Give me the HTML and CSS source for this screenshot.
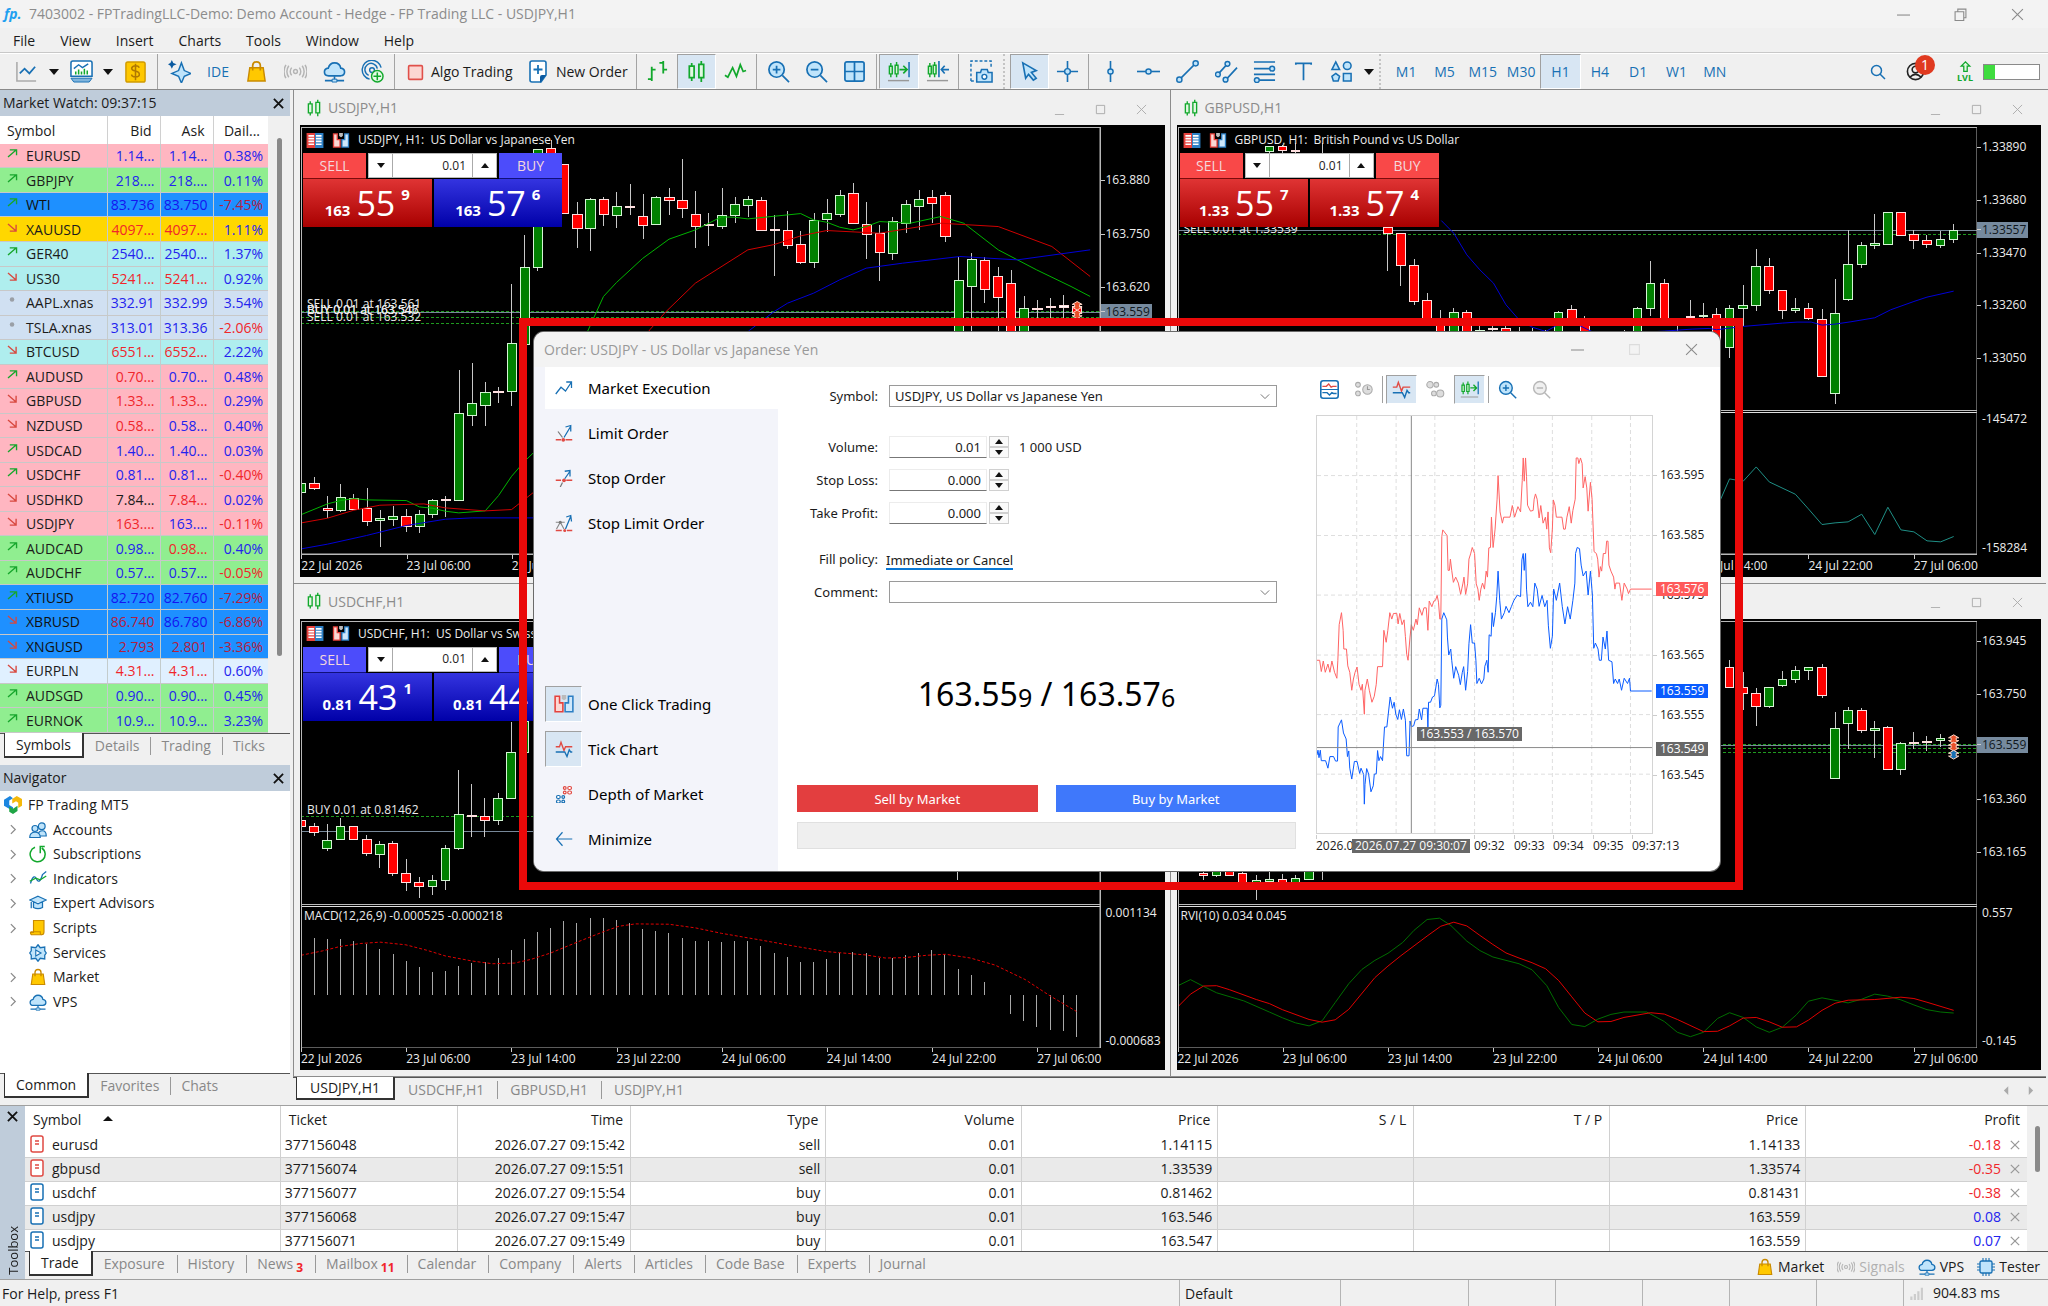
FILE: index.html
```html
<!DOCTYPE html>
<html lang="en">
<head>
<meta charset="utf-8">
<title>7403002 - FPTradingLLC-Demo: Demo Account - Hedge - FP Trading LLC - USDJPY,H1</title>
<link rel="stylesheet" href="styles.css">
</head>
<body>
<svg class="defs" aria-hidden="true">
  <symbol id="i-close" viewBox="0 0 12 12"><path d="M1 1l10 10M11 1L1 11"/></symbol>
  <symbol id="i-min" viewBox="0 0 12 12"><path d="M0 6.500h12"/></symbol>
  <symbol id="i-low" viewBox="0 0 12 12"><path d="M1 11.500h10"/></symbol>
  <symbol id="i-max" viewBox="0 0 12 12"><path d="M1.500 1.500h9v9h-9z"/></symbol>
  <symbol id="i-up" viewBox="0 0 12 10"><path d="M1 9L10 1M3 1h7.500v6" fill="none" stroke="#17a62c" stroke-width="1.500"/></symbol>
  <symbol id="i-down" viewBox="0 0 12 10"><path d="M1 1l9 8M10 2v7H3" fill="none" stroke="#d8483f" stroke-width="1.500"/></symbol>
  <symbol id="i-flat" viewBox="0 0 12 10"><circle cx="5.500" cy="4" r="2.500" fill="#9a9fa6"/></symbol>
  <symbol id="i-candles" viewBox="0 0 24 24"><path d="M4.500 6.500h5v12h-5zM14.500 4.500h5v14h-5zM7 3v3M7 19v3M17 1v3M17 19v4" fill="#e2f8e2" stroke="#12a82c" stroke-width="1.800"/></symbol>
  <symbol id="i-bag" viewBox="0 0 24 24"><path d="M5 8h14l2 14H3z" fill="#ffc800" stroke="#c98a00" stroke-width="1.500"/><path d="M8 11V6q0-4 4-4t4 4v5" fill="none" stroke="#c98a00" stroke-width="1.800"/></symbol>
  <symbol id="i-signal" viewBox="0 0 24 24"><g fill="none" stroke="#b4b4b4" stroke-width="1.500"><circle cx="12" cy="12" r="2"/><path d="M8 8q-3 4 0 8M16 8q3 4 0 8M5 6q-4 6 0 12M19 6q4 6 0 12M2 5q-4 7 0 14M22 5q4 7 0 14"/></g></symbol>
  <symbol id="i-cloud" viewBox="0 0 24 24"><path d="M6 16.500q-4.500 0-4.500-4 0-3.500 4-4Q7 3 12 3q5.500 0 6.500 5.500 4 .5 4 4t-4 4z" fill="#bfe4fb" stroke="#1870b4" stroke-width="1.700"/><path d="M12 17v3M2 21.500h20" stroke="#1870b4" stroke-width="1.700"/><path d="M9.500 20h5v3h-5z" fill="#bfe4fb" stroke="#1870b4"/></symbol>
  <symbol id="i-zoomin" viewBox="0 0 24 24"><circle cx="10" cy="10" r="8" fill="#bfe4fb" stroke="#1870b4" stroke-width="1.800"/><path d="M16 16l7 7M10 6v8M6 10h8" stroke="#1870b4" stroke-width="1.800"/></symbol>
  <symbol id="i-zoomout" viewBox="0 0 24 24"><circle cx="10" cy="10" r="8" fill="#bfe4fb" stroke="#1870b4" stroke-width="1.800"/><path d="M16 16l7 7M6 10h8" stroke="#1870b4" stroke-width="1.800"/></symbol>
  <symbol id="i-shift" viewBox="0 0 24 24"><path d="M2.500 6.500h3v8h-3zM8.500 5.500h3v9h-3zM4 3v3M4 15v3M10 2v3M10 15v3" fill="#d9f6d9" stroke="#12a82c" stroke-width="1.500"/><path d="M13 10h7M17 6l4 4-4 4" fill="none" stroke="#12a82c" stroke-width="1.700"/><path d="M23 2v16" stroke="#1870b4" stroke-width="1.600"/><path d="M1 21.500h22" stroke="#999" stroke-width="1.500"/></symbol>
  <symbol id="i-ticks" viewBox="0 0 24 24"><path d="M1 9h5l2-6 4 11 2-5h9" fill="none" stroke="#e04a43" stroke-width="1.800"/><path d="M1 16h12l3 6 3-9 2 3h2" fill="none" stroke="#1870b4" stroke-width="1.800"/></symbol>
  <symbol id="i-market" viewBox="0 0 18 16"><path d="M0 0h9v16H0z" fill="#e5413c"/><path d="M9 0h9v16H9z" fill="#2c7fc4"/><path d="M2 3h6M2 6h6M2 9h6M2 12h6M10 3h6M10 6h6M10 9h6M10 12h6" stroke="#fff" stroke-width="1.800"/></symbol>
  <symbol id="i-oneclick" viewBox="0 0 18 16"><path d="M1 1h4v6h3v8H1z" fill="#fcd8d4" stroke="#e5413c" stroke-width="1.400"/><path d="M17 1h-4v6h-3v8h7z" fill="#cfe8fb" stroke="#2c7fc4" stroke-width="1.400"/><path d="M7 0h4v3q-2 3-4 0z" fill="#bbb"/></symbol>
  <symbol id="i-doc" viewBox="0 0 14 18"><path d="M1 3q0-2 2-2h8q2 0 2 2v12q0 2-2 2H3q-2 0-2-2z" fill="#fff" stroke="currentColor" stroke-width="1.500"/><path d="M5 6h4M5 9h4" stroke="currentColor" stroke-width="1.300"/></symbol>
  <symbol id="i-chev" viewBox="0 0 8 12"><path d="M1 1l5 5-5 5" fill="none" stroke="#8a8a8a" stroke-width="1.400"/></symbol>
  <symbol id="i-chevdown" viewBox="0 0 12 8"><path d="M1 1.500l5 5 5-5" fill="none" stroke="#777" stroke-width="1.200"/></symbol>
</svg>

<header class="titlebar">
  <span class="logo">fp.</span>
  <h1>7403002 - FPTradingLLC-Demo: Demo Account - Hedge - FP Trading LLC - USDJPY,H1</h1>
  <div class="sys">
    <button aria-label="Minimize window"><svg><use href="#i-min"/></svg></button>
    <button aria-label="Restore window"><svg viewBox="0 0 12 12"><path d="M1 3.500h8v8H1zM3.500 3V1H11v8H9.500"/></svg></button>
    <button aria-label="Close window"><svg><use href="#i-close"/></svg></button>
  </div>
</header>
<nav class="menubar" aria-label="Main menu">
  <button>File</button><button>View</button><button>Insert</button><button>Charts</button><button>Tools</button><button>Window</button><button>Help</button>
</nav>

<div class="toolbar" role="toolbar" aria-label="Tools">
  <div class="grp g-files">
    <button class="w-wide" aria-label="New chart"><svg viewBox="0 0 24 24"><path d="M2 2v20h20" fill="none" stroke="#aaa" stroke-width="1.600"/><path d="M5 14l5-5 5 5 6-7" fill="none" stroke="#1870b4" stroke-width="1.800"/></svg></button>
    <button class="caret" aria-label="New chart list"></button>
    <button class="w-wide" aria-label="Profiles"><svg viewBox="0 0 24 24"><path d="M1 3q0-2 2-2h18q2 0 2 2v14H1z" fill="#fff" stroke="#1870b4" stroke-width="1.600"/><path d="M1 19h22l-3 4H4z" fill="#7fb4dc" stroke="#1870b4"/><path d="M4 9l5-4 4 3 6-4" fill="none" stroke="#1870b4" stroke-width="1.500"/><path d="M6 15v-3M9 15v-5M12 15v-3M15 15v-6M18 15v-4" stroke="#12a82c" stroke-width="1.600"/></svg></button>
    <button class="caret" aria-label="Profile list"></button>
    <button class="w-wide" aria-label="Accounts"><svg viewBox="0 0 24 24"><rect x="2" y="2" width="20" height="21" rx="2" fill="#ffc800" stroke="#d09a00" stroke-width="1.500"/><path d="M16 8q-1-2-4-2t-4 2.500q0 2 4 3t4 3.500q0 2.500-4 2.500t-4-2.500M12 4v17" fill="none" stroke="#b07800" stroke-width="1.600"/></svg></button>
  </div>
  <div class="grp g-six">
    <button aria-label="Assistant"><svg viewBox="0 0 24 24"><path d="M14 3l3 8 7 3-7 3-3 7-3-7-7-3 7-3z" fill="#bfe4fb" stroke="#1870b4" stroke-width="1.500"/><path d="M4 0l1.500 3L9 4.500 5.500 6 4 9 2.500 6 0 4.500 2.500 3z" fill="#0b5aa0"/></svg></button>
    <button class="ide">IDE</button>
    <button aria-label="Market"><svg><use href="#i-bag"/></svg></button>
    <button aria-label="Signals"><svg><use href="#i-signal"/></svg></button>
    <button aria-label="VPS"><svg><use href="#i-cloud"/></svg></button>
    <button aria-label="Connect"><svg viewBox="0 0 24 24"><g fill="none" stroke="#1870b4" stroke-width="1.500"><path d="M9 20a10 10 0 1 1 12-12M8 16a6.500 6.500 0 1 1 9-7"/><circle cx="11.500" cy="10.500" r="2.500"/></g><circle cx="17" cy="17" r="6" fill="#e6fbe6" stroke="#12a82c" stroke-width="1.500"/><path d="M17 13v8M13 17h8" stroke="#12a82c" stroke-width="1.600"/></svg></button>
  </div>
  <div class="grp g-text">
    <button><svg class="algo" viewBox="0 0 16 16"><rect x="1.500" y="1.500" width="13" height="13" rx="1" fill="#fcd6d2" stroke="#e0504a" stroke-width="1.500"/></svg>Algo Trading</button>
    <button><svg viewBox="0 0 20 24"><path d="M3 1h12q2 0 2 2v12l-5 7H3q-2 0-2-2V3q0-2 2-2z" fill="#fff" stroke="#1870b4" stroke-width="1.600"/><path d="M17 15l-6 8v-6q0-2 2-2z" fill="#0b5aa0"/><path d="M9 5v9M4.500 9.500h9" stroke="#1870b4" stroke-width="1.800"/></svg>New Order</button>
  </div>
  <div class="grp g-three">
    <button aria-label="Bar chart"><svg viewBox="0 0 24 24"><path d="M6 7v15M2 20h4M6 10h4M18 1v13M14 3h4M18 10h4" fill="none" stroke="#12a82c" stroke-width="1.900"/></svg></button>
    <button class="on" aria-label="Candlesticks"><svg><use href="#i-candles"/></svg></button>
    <button aria-label="Line chart"><svg viewBox="0 0 24 24"><path d="M1 16l3 2 5-10 4 9 4-12 3 7 3-1" fill="none" stroke="#12a82c" stroke-width="1.800"/></svg></button>
  </div>
  <div class="grp g-three">
    <button aria-label="Zoom in"><svg><use href="#i-zoomin"/></svg></button>
    <button aria-label="Zoom out"><svg><use href="#i-zoomout"/></svg></button>
    <button aria-label="Tile windows"><svg viewBox="0 0 24 24"><rect x="2" y="2" width="20" height="20" rx="2" fill="#bfe4fb" stroke="#1870b4" stroke-width="1.800"/><path d="M12 2v20M2 12h20" stroke="#1870b4" stroke-width="1.800"/></svg></button>
  </div>
  <div class="grp g-two">
    <button class="on" aria-label="Scroll to end"><svg><use href="#i-shift"/></svg></button>
    <button aria-label="Chart shift"><svg viewBox="0 0 24 24"><path d="M2.500 6.500h3v8h-3zM7.500 5.500h3v9h-3zM4 3v3M4 15v3M9 2v3M9 15v3" fill="#d9f6d9" stroke="#12a82c" stroke-width="1.500"/><path d="M13.500 1v17M16 10h8M19.500 6l-3.500 4 3.500 4" fill="none" stroke="#1870b4" stroke-width="1.700"/><path d="M1 21.500h22" stroke="#999" stroke-width="1.500"/></svg></button>
  </div>
  <div class="grp g-one">
    <button aria-label="Screenshot"><svg viewBox="0 0 24 24"><path d="M1 22V1h21v8M1 22h4" fill="none" stroke="#1870b4" stroke-width="1.500" stroke-dasharray="3 2"/><path d="M7 13h4l1-3h6l1 3h4v10H7z" fill="#bfe4fb" stroke="#1870b4" stroke-width="1.600"/><circle cx="15" cy="17.500" r="2.500" fill="#fff" stroke="#1870b4" stroke-width="1.500"/></svg></button>
  </div>
  <div class="grp g-cursor">
    <button class="on" aria-label="Cursor"><svg viewBox="0 0 24 24"><path d="M5 3l14 8-5 2 5 6-3 2-5-6-3 4z" fill="#bfe4fb" stroke="#1870b4" stroke-width="1.700"/></svg></button>
    <button aria-label="Crosshair"><svg viewBox="0 0 24 24"><path d="M12 1v22M1 12h22" stroke="#1870b4" stroke-width="1.700"/><circle cx="12" cy="12" r="3" fill="#bfe4fb" stroke="#1870b4" stroke-width="1.500"/></svg></button>
  </div>
  <div class="grp g-draw">
    <button aria-label="Vertical line"><svg viewBox="0 0 24 24"><path d="M12 1v22" stroke="#1870b4" stroke-width="1.700"/><circle cx="12" cy="12" r="2.700" fill="#bfe4fb" stroke="#1870b4" stroke-width="1.500"/></svg></button>
    <button aria-label="Horizontal line"><svg viewBox="0 0 24 24"><path d="M0 12h24" stroke="#1870b4" stroke-width="1.700"/><circle cx="12" cy="12" r="2.700" fill="#bfe4fb" stroke="#1870b4" stroke-width="1.500"/></svg></button>
    <button aria-label="Trendline"><svg viewBox="0 0 24 24"><path d="M3 21L21 3" stroke="#1870b4" stroke-width="1.700"/><g fill="#bfe4fb" stroke="#1870b4" stroke-width="1.500"><circle cx="3.500" cy="20.500" r="2.700"/><circle cx="20.500" cy="3.500" r="2.700"/></g></svg></button>
    <button aria-label="Channel"><svg viewBox="0 0 24 24"><path d="M3 15L13 4M11 21L23 8" stroke="#1870b4" stroke-width="1.700"/><g fill="#bfe4fb" stroke="#1870b4" stroke-width="1.500"><circle cx="3" cy="15" r="2.500"/><circle cx="13" cy="4" r="2.500"/><circle cx="11" cy="20.500" r="2.500"/></g></svg></button>
    <button aria-label="Fibonacci"><svg viewBox="0 0 24 24"><path d="M1 2h22M1 9h22M1 15h22M1 21h22" stroke="#1870b4" stroke-width="1.600"/><g fill="#bfe4fb" stroke="#1870b4" stroke-width="1.500"><circle cx="20" cy="9" r="2.500"/><circle cx="4" cy="21" r="2.500"/></g></svg></button>
    <button aria-label="Text"><svg viewBox="0 0 24 24"><path d="M4 5V3.500h16V5M12 4v17" fill="none" stroke="#1870b4" stroke-width="1.800"/></svg></button>
    <button aria-label="Objects"><svg viewBox="0 0 24 24"><g fill="#bfe4fb" stroke="#1870b4" stroke-width="1.600"><path d="M6 2l4 8H2z"/><circle cx="18" cy="6" r="4"/><path d="M6 14l4 3-1.500 5h-5L2 17z"/><path d="M14 14h8v8h-8z"/></g></svg></button>
    <button class="caret" aria-label="Object list"></button>
  </div>
  <div class="grp g-tf">
    <button>M1</button><button>M5</button><button>M15</button><button>M30</button><button class="on">H1</button><button>H4</button><button>D1</button><button>W1</button><button>MN</button>
  </div>
  <div class="tb-end">
    <button aria-label="Search"><svg viewBox="0 0 16 16"><circle cx="6.500" cy="6.500" r="5" fill="none" stroke="#1870b4" stroke-width="1.500"/><path d="M10 10l5 5" stroke="#1870b4" stroke-width="1.500"/></svg></button>
    <button class="user" aria-label="Profile, 1 notification"><svg viewBox="0 0 20 20"><g fill="none" stroke="#222" stroke-width="1.700"><circle cx="10" cy="10" r="8.500"/><circle cx="10" cy="8" r="3.500"/><path d="M4 16q6-6 12 0"/></g></svg><span class="badge">1</span></button>
    <div class="lvl"><svg viewBox="0 0 14 14"><path d="M7 1l5 5H9v6H5V6H2z" fill="#e2f8e2" stroke="#12a82c" stroke-width="1.500"/></svg>LVL</div>
    <div class="level"><span></span></div>
  </div>
</div>

<main class="main">
  <aside class="docks">
    <section class="dock">
      <header class="dock-head"><h2>Market Watch: 09:37:15</h2><button aria-label="Close Market Watch"><svg><use href="#i-close"/></svg></button></header>
      <div class="mw-body">
        <table class="mw">
          <colgroup><col class="c-sym"><col class="c-num"><col class="c-num"><col class="c-day"></colgroup>
          <thead><tr><th>Symbol</th><th>Bid</th><th>Ask</th><th>Dail...</th></tr></thead>
          <tbody>
            <tr class="pink"><td><svg><use href="#i-up"/></svg>EURUSD</td><td>1.14...</td><td>1.14...</td><td>0.38%</td></tr>
            <tr class="green"><td><svg><use href="#i-up"/></svg>GBPJPY</td><td>218....</td><td>218....</td><td>0.11%</td></tr>
            <tr class="blue"><td><svg><use href="#i-up"/></svg>WTI</td><td>83.736</td><td>83.750</td><td class="dn">-7.45%</td></tr>
            <tr class="gold"><td><svg><use href="#i-down"/></svg>XAUUSD</td><td class="dn">4097...</td><td class="dn">4097...</td><td>1.11%</td></tr>
            <tr class="teal"><td><svg><use href="#i-up"/></svg>GER40</td><td>2540...</td><td>2540...</td><td>1.37%</td></tr>
            <tr class="teal"><td><svg><use href="#i-down"/></svg>US30</td><td class="dn">5241...</td><td class="dn">5241...</td><td>0.92%</td></tr>
            <tr class="sky"><td><svg><use href="#i-flat"/></svg>AAPL.xnas</td><td>332.91</td><td>332.99</td><td>3.54%</td></tr>
            <tr class="sky"><td><svg><use href="#i-flat"/></svg>TSLA.xnas</td><td>313.01</td><td>313.36</td><td class="dn">-2.06%</td></tr>
            <tr class="teal"><td><svg><use href="#i-down"/></svg>BTCUSD</td><td class="dn">6551...</td><td class="dn">6552...</td><td>2.22%</td></tr>
            <tr class="pink"><td><svg><use href="#i-up"/></svg>AUDUSD</td><td class="dn">0.70...</td><td>0.70...</td><td>0.48%</td></tr>
            <tr class="pink"><td><svg><use href="#i-down"/></svg>GBPUSD</td><td class="dn">1.33...</td><td class="dn">1.33...</td><td>0.29%</td></tr>
            <tr class="pink"><td><svg><use href="#i-down"/></svg>NZDUSD</td><td class="dn">0.58...</td><td>0.58...</td><td>0.40%</td></tr>
            <tr class="pink"><td><svg><use href="#i-up"/></svg>USDCAD</td><td>1.40...</td><td>1.40...</td><td>0.03%</td></tr>
            <tr class="pink"><td><svg><use href="#i-up"/></svg>USDCHF</td><td>0.81...</td><td>0.81...</td><td class="dn">-0.40%</td></tr>
            <tr class="pink"><td><svg><use href="#i-down"/></svg>USDHKD</td><td class="eq">7.84...</td><td class="dn">7.84...</td><td>0.02%</td></tr>
            <tr class="pink"><td><svg><use href="#i-down"/></svg>USDJPY</td><td class="dn">163....</td><td>163....</td><td class="dn">-0.11%</td></tr>
            <tr class="green"><td><svg><use href="#i-up"/></svg>AUDCAD</td><td>0.98...</td><td class="dn">0.98...</td><td>0.40%</td></tr>
            <tr class="green"><td><svg><use href="#i-up"/></svg>AUDCHF</td><td>0.57...</td><td>0.57...</td><td class="dn">-0.05%</td></tr>
            <tr class="blue"><td><svg><use href="#i-up"/></svg>XTIUSD</td><td>82.720</td><td>82.760</td><td class="dn">-7.29%</td></tr>
            <tr class="blue"><td><svg><use href="#i-down"/></svg>XBRUSD</td><td class="dn">86.740</td><td>86.780</td><td class="dn">-6.86%</td></tr>
            <tr class="blue"><td><svg><use href="#i-down"/></svg>XNGUSD</td><td class="dn">2.793</td><td class="dn">2.801</td><td class="dn">-3.36%</td></tr>
            <tr class="pale"><td><svg><use href="#i-down"/></svg>EURPLN</td><td class="dn">4.31...</td><td class="dn">4.31...</td><td>0.60%</td></tr>
            <tr class="green"><td><svg><use href="#i-up"/></svg>AUDSGD</td><td>0.90...</td><td>0.90...</td><td>0.45%</td></tr>
            <tr class="green"><td><svg><use href="#i-up"/></svg>EURNOK</td><td>10.9...</td><td>10.9...</td><td>3.23%</td></tr>
          </tbody>
        </table>
        <div class="scroll mw-scroll"></div>
      </div>
      <div class="tabs dock-tabs"><button class="active">Symbols</button><button>Details</button><button>Trading</button><button>Ticks</button></div>
    </section>
    <section class="dock">
      <header class="dock-head"><h2>Navigator</h2><button aria-label="Close Navigator"><svg><use href="#i-close"/></svg></button></header>
      <div class="nav-body">
        <ul class="tree">
          <li class="root"><svg viewBox="0 0 24 24"><path d="M0 5l8-5 4 3-5 3v6l5 3v5L0 13z" fill="#1c86e0"/><path d="M11 4l6-4 7 4v9l-5 3V9l-3-2-5 3z" fill="#f5b90a"/><path d="M7 14l5 3 6-4v7l-6 4-5-3z" fill="#1fa545"/></svg>FP Trading MT5</li>
          <li><svg class="chev"><use href="#i-chev"/></svg><svg viewBox="0 0 24 24"><g fill="#bfe4fb" stroke="#1870b4" stroke-width="1.600"><circle cx="17" cy="7" r="4.500"/><path d="M12 20q0-7 6-7 5 0 5 7z"/><circle cx="8" cy="10" r="4"/><path d="M1 22q0-7 7-7t7 7z"/></g></svg>Accounts</li>
          <li><svg class="chev"><use href="#i-chev"/></svg><svg viewBox="0 0 24 24"><path d="M8 3a10 10 0 1 0 9 1M21 2h-6v9" fill="none" stroke="#12a82c" stroke-width="2"/></svg>Subscriptions</li>
          <li><svg class="chev"><use href="#i-chev"/></svg><svg viewBox="0 0 24 24"><path d="M2 18q4-14 8-6t8-6l5-4" fill="none" stroke="#1870b4" stroke-width="1.700"/><path d="M1 15l8-4 6 2 8-5" fill="none" stroke="#12a82c" stroke-width="1.700"/></svg>Indicators</li>
          <li><svg class="chev"><use href="#i-chev"/></svg><svg viewBox="0 0 24 24"><path d="M12 3l11 5-11 5L1 8zM6 11v7q6 3 12 0v-7M3 9v10" fill="#bfe4fb" stroke="#1870b4" stroke-width="1.700"/></svg>Expert Advisors</li>
          <li><svg class="chev"><use href="#i-chev"/></svg><svg viewBox="0 0 24 24"><path d="M6 2h14v15q0 4-3 4H4q-2 0-2-3h4z" fill="#ffc800" stroke="#c98a00" stroke-width="1.500"/><path d="M2 17h13v2q0 2 2 2" fill="none" stroke="#c98a00" stroke-width="1.500"/></svg>Scripts</li>
          <li><i class="chev"></i><svg viewBox="0 0 24 24"><path d="M12 1l3 4 6-1v5l2 3-2 3v5l-6-1-3 4-3-4-6 1v-5l-2-3 2-3V4l6 1z" fill="#bfe4fb" stroke="#1870b4" stroke-width="1.700"/><path d="M9 8l7 4-7 4z" fill="#fff" stroke="#1870b4" stroke-width="1.500"/></svg>Services</li>
          <li><svg class="chev"><use href="#i-chev"/></svg><svg><use href="#i-bag"/></svg>Market</li>
          <li><svg class="chev"><use href="#i-chev"/></svg><svg><use href="#i-cloud"/></svg>VPS</li>
        </ul>
      </div>
      <div class="tabs dock-tabs"><button class="active">Common</button><button>Favorites</button><button>Chats</button></div>
    </section>
  </aside>

  <div class="workspace">
    <div class="mdi" id="mdi"></div>
    <div class="tabs ws-tabs"><button class="active">USDJPY,H1</button><button>USDCHF,H1</button><button>GBPUSD,H1</button><button>USDJPY,H1</button>
      <span class="pager"><svg viewBox="0 0 8 10"><path d="M6 0v10L1 5z"/></svg><svg viewBox="0 0 8 10"><path d="M2 0v10l5-5z"/></svg></span>
    </div>
  </div>

  <div class="highlight">
    <section class="dialog" role="dialog" aria-labelledby="dlg-title">
      <header class="dlg-head"><h2 id="dlg-title">Order: USDJPY - US Dollar vs Japanese Yen</h2>
        <div class="sys"><button aria-label="Minimize"><svg><use href="#i-min"/></svg></button><button class="off" aria-label="Maximize" disabled><svg><use href="#i-max"/></svg></button><button aria-label="Close"><svg><use href="#i-close"/></svg></button></div>
      </header>
      <nav class="side" aria-label="Order type">
        <button class="active"><span><svg viewBox="0 0 24 24"><path d="M1 20l7-9 6 5 8-12M15 4h7v8" fill="none" stroke="#1870b4" stroke-width="1.700"/></svg></span>Market Execution</button>
        <button><span><svg viewBox="0 0 24 24"><path d="M1 21h7M14 21h9" stroke="#e04a43" stroke-width="1.700"/><circle cx="11" cy="21" r="2.500" fill="#e04a43"/><path d="M4 10l6 8" stroke="#777" stroke-width="1.600"/><path d="M12 18l9-15M14 4l7-2v8" fill="none" stroke="#1870b4" stroke-width="1.700"/></svg></span>Limit Order</button>
        <button><span><svg viewBox="0 0 24 24"><path d="M1 15h7M15 15h8" stroke="#e04a43" stroke-width="1.700"/><circle cx="12" cy="15" r="2.500" fill="#e04a43"/><path d="M7 24l3-6" stroke="#777" stroke-width="1.600"/><path d="M13 13l7-10M13 3l7-1v8" fill="none" stroke="#1870b4" stroke-width="1.700"/></svg></span>Stop Order</button>
        <button><span><svg viewBox="0 0 24 24"><path d="M1 22h8M16 22h7" stroke="#e04a43" stroke-width="1.700"/><circle cx="13" cy="22" r="2" fill="#e04a43"/><path d="M2 20l5-9 5 9M1 11h12" fill="none" stroke="#888" stroke-width="1.500"/><circle cx="7" cy="11" r="2" fill="#777"/><path d="M14 20l7-17M15 4l6-2 1 8" fill="none" stroke="#1870b4" stroke-width="1.700"/></svg></span>Stop Limit Order</button>
        <div class="spacer"></div>
        <button><span class="on"><svg><use href="#i-oneclick"/></svg></span>One Click Trading</button>
        <button><span class="on"><svg><use href="#i-ticks"/></svg></span>Tick Chart</button>
        <button><span><svg viewBox="0 0 24 24"><g fill="#fff" stroke="#e04a43" stroke-width="1.600"><circle cx="13" cy="4" r="1.800"/><rect x="17" y="2" width="5" height="4" rx="2"/><circle cx="13" cy="10" r="1.800"/><rect x="17" y="8" width="5" height="4" rx="2"/></g><g fill="#fff" stroke="#1870b4" stroke-width="1.600"><rect x="2" y="14" width="5" height="4" rx="2"/><circle cx="11" cy="16" r="1.800"/><rect x="2" y="20" width="5" height="4" rx="2"/><circle cx="11" cy="22" r="1.800"/></g></svg></span>Depth of Market</button>
        <button><span><svg viewBox="0 0 24 24"><path d="M23 12H2M10 3l-8 9 8 9" fill="none" stroke="#1870b4" stroke-width="1.600"/></svg></span>Minimize</button>
      </nav>
      <form class="form">
        <div class="row"><label for="f-symbol">Symbol:</label><div class="combo"><select id="f-symbol"><option>USDJPY, US Dollar vs Japanese Yen</option></select><svg><use href="#i-chevdown"/></svg></div></div>
        <div class="row gap-l"><label for="f-vol">Volume:</label><input id="f-vol" class="num" value="0.01"><span class="spin"><button type="button" aria-label="Volume up"></button><button type="button" class="dec" aria-label="Volume down"></button></span><span class="unit">1 000 USD</span></div>
        <div class="row gap-s"><label for="f-sl">Stop Loss:</label><input id="f-sl" class="num" value="0.000"><span class="spin"><button type="button" aria-label="Stop loss up"></button><button type="button" class="dec" aria-label="Stop loss down"></button></span></div>
        <div class="row gap-s"><label for="f-tp">Take Profit:</label><input id="f-tp" class="num" value="0.000"><span class="spin"><button type="button" aria-label="Take profit up"></button><button type="button" class="dec" aria-label="Take profit down"></button></span></div>
        <div class="row gap-m"><span class="lab">Fill policy:</span><a href="#fill" class="policy">Immediate or Cancel</a></div>
        <div class="row gap-s"><label for="f-com">Comment:</label><div class="combo"><input id="f-com"><svg><use href="#i-chevdown"/></svg></div></div>
        <output class="quote">163.55<small>9</small> / 163.57<small>6</small></output>
        <div class="deal"><button type="button" class="sell">Sell by Market</button><button type="button" class="buy">Buy by Market</button></div>
        <div class="result"></div>
      </form>
      <div class="ticks">
        <div class="tick-tools">
          <button aria-label="Ticks window"><svg viewBox="0 0 24 24"><rect x="1" y="1" width="22" height="22" rx="3" fill="#fff" stroke="#1870b4" stroke-width="2"/><path d="M1 12h22" stroke="#1870b4" stroke-width="1.500"/><path d="M3 8h5l3-3 3 4 2-1h5" fill="none" stroke="#e04a43" stroke-width="1.700"/><path d="M3 16h6l3 3 3-3 2 1h4" fill="none" stroke="#1870b4" stroke-width="1.700"/></svg></button>
          <button aria-label="Time mode"><svg viewBox="0 0 24 24"><g fill="#ddd" stroke="#aaa" stroke-width="1.300"><circle cx="5" cy="6" r="3"/><circle cx="5" cy="17" r="3"/><circle cx="17" cy="12" r="6"/></g><path d="M17 8v4h3" fill="none" stroke="#999" stroke-width="1.300"/></svg></button>
          <i></i>
          <button class="on" aria-label="Tick lines"><svg><use href="#i-ticks"/></svg></button>
          <button aria-label="Grid"><svg viewBox="0 0 24 24"><g fill="#ddd" stroke="#aaa" stroke-width="1.300"><circle cx="5" cy="6" r="4"/><circle cx="13" cy="6" r="3"/><circle cx="10" cy="17" r="3"/><circle cx="18" cy="17" r="4.500"/></g></svg></button>
          <button class="on" aria-label="Auto scroll"><svg><use href="#i-shift"/></svg></button>
          <i></i>
          <button aria-label="Zoom in"><svg><use href="#i-zoomin"/></svg></button>
          <button class="dim" aria-label="Zoom out"><svg><use href="#i-zoomout"/></svg></button>
        </div>
        <div class="tick-chart" id="tick-chart"></div>
      </div>
    </section>
  </div>
</main>

<section class="toolbox">
  <div class="tbx-side"><button aria-label="Close Toolbox"><svg><use href="#i-close"/></svg></button><h2>Toolbox</h2></div>
  <div class="tbx-main">
    <div class="tbx-body">
      <table class="trades">
        <colgroup><col class="t1"><col class="t2"><col class="t3"><col class="t4"><col class="t5"><col class="t5"><col class="t5"><col class="t5"><col class="t5"><col></colgroup>
        <thead><tr><th>Symbol <span class="sort"></span></th><th>Ticket</th><th>Time</th><th>Type</th><th>Volume</th><th>Price</th><th>S / L</th><th>T / P</th><th>Price</th><th>Profit</th></tr></thead>
        <tbody>
          <tr><td><svg class="doc red"><use href="#i-doc"/></svg>eurusd</td><td>377156048</td><td>2026.07.27 09:15:42</td><td>sell</td><td>0.01</td><td>1.14115</td><td></td><td></td><td>1.14133</td><td class="neg">-0.18<button aria-label="Close position"><svg><use href="#i-close"/></svg></button></td></tr>
          <tr><td><svg class="doc red"><use href="#i-doc"/></svg>gbpusd</td><td>377156074</td><td>2026.07.27 09:15:51</td><td>sell</td><td>0.01</td><td>1.33539</td><td></td><td></td><td>1.33574</td><td class="neg">-0.35<button aria-label="Close position"><svg><use href="#i-close"/></svg></button></td></tr>
          <tr><td><svg class="doc"><use href="#i-doc"/></svg>usdchf</td><td>377156077</td><td>2026.07.27 09:15:54</td><td>buy</td><td>0.01</td><td>0.81462</td><td></td><td></td><td>0.81431</td><td class="neg">-0.38<button aria-label="Close position"><svg><use href="#i-close"/></svg></button></td></tr>
          <tr><td><svg class="doc"><use href="#i-doc"/></svg>usdjpy</td><td>377156068</td><td>2026.07.27 09:15:47</td><td>buy</td><td>0.01</td><td>163.546</td><td></td><td></td><td>163.559</td><td class="pos">0.08<button aria-label="Close position"><svg><use href="#i-close"/></svg></button></td></tr>
          <tr><td><svg class="doc"><use href="#i-doc"/></svg>usdjpy</td><td>377156071</td><td>2026.07.27 09:15:49</td><td>buy</td><td>0.01</td><td>163.547</td><td></td><td></td><td>163.559</td><td class="pos">0.07<button aria-label="Close position"><svg><use href="#i-close"/></svg></button></td></tr>
        </tbody>
      </table>
      <div class="scroll tbx-scroll"></div>
    </div>
    <div class="tabs tbx-tabs"><button class="active">Trade</button><button>Exposure</button><button>History</button><button>News<sub>3</sub></button><button>Mailbox<sub>11</sub></button><button>Calendar</button><button>Company</button><button>Alerts</button><button>Articles</button><button>Code Base</button><button>Experts</button><button>Journal</button>
      <div class="links"><a href="#market"><svg><use href="#i-bag"/></svg>Market</a><a href="#signals" class="dim"><svg><use href="#i-signal"/></svg>Signals</a><a href="#vps"><svg><use href="#i-cloud"/></svg>VPS</a><a href="#tester"><svg viewBox="0 0 24 24"><path d="M8 0v24M12 0v24M16 0v24M0 8h24M0 12h24M0 16h24" stroke="#1870b4" stroke-width="1.500"/><rect x="4" y="4" width="16" height="16" rx="2" fill="#bfe4fb" stroke="#1870b4" stroke-width="1.800"/></svg>Tester</a></div>
    </div>
  </div>
</section>
<footer class="status">
  <span class="s-help">For Help, press F1</span><span class="s-def">Default</span><span class="s-a"></span><span class="s-b"></span><span class="s-b"></span><span class="s-b"></span><span class="s-b"></span><span class="s-b"></span><span class="s-ms"><svg viewBox="0 0 18 16"><path d="M2 16v-4M6 16v-7M10 16V6M14 16V2" stroke="#ccc" stroke-width="2.500"/></svg>904.83 ms</span>
</footer>
<script src="charts.js"></script>
</body>
</html>
```
FILE: styles.css
```css
* { box-sizing: border-box; }
html, body { height: 100%; }
body {
  margin: 0; display: flex; flex-direction: column; overflow: hidden;
  background: #f0f0f0; color: #1b1b1b;
  font: 14px/20px "Open Sans", "Noto Sans", sans-serif;
}
h1, h2 { margin: 0; font: inherit; }
button { font: inherit; color: inherit; background: none; border: 0; padding: 0; margin: 0; }
input, select { font: inherit; color: inherit; }
svg { display: block; flex: none; }
.defs { position: absolute; width: 0; height: 0; }

.titlebar { display: flex; align-items: center; height: 28px; padding-left: 4px; background: #f3f3f3; color: #8c8c8c; }
.titlebar h1 { flex: 1; margin-left: 7px; }
.logo { width: 18px; font-weight: 700; font-style: italic; color: #1fa0f0; }
.sys { display: flex; }
.sys button { width: 57px; height: 28px; display: grid; place-items: center; }
.titlebar .sys { padding-right: 2px; }
.sys svg { width: 13px; height: 13px; fill: none; stroke: #8a8a8a; stroke-width: 1; }
.sys .off svg { stroke: #dcdcdc; }

.menubar { display: flex; height: 25px; border-bottom: 1px solid #c8c8c8; }
.menubar button { padding: 0 13px 0 12px; line-height: 26px; }
.menubar button:first-child { padding-left: 13px; }

.toolbar { display: flex; height: 37px; border-bottom: 1px solid #8a8a8a; border-top: 1px solid #fff; font-size: 14px; }
.grp { display: flex; align-items: center; height: 35px; border-right: 1px solid #a4a4a4; padding: 0 2px; }
.grp button { flex: 1; height: 35px; display: flex; align-items: center; justify-content: center; }
.grp svg { width: 23px; height: 23px; }
.on { background: #d8e6f3; border: 1px solid #fff; border-top-color: #a0a0a0; border-left-color: #a0a0a0; }
.grp .caret { flex: none; width: 16px; }
.caret::after { content: ""; border: 5px solid transparent; border-top: 6px solid #111; border-bottom: 0; }
.g-files { width: 158px; padding-left: 7px; border-left: 0; }
.g-six { width: 237px; }
.ide { color: #1870b4; }
.g-text { width: 242px; padding: 0 6px 0 12px; gap: 14px; }
.grp.g-text button { flex: auto; gap: 7px; justify-content: flex-start; padding-top: 1px; }
.g-text svg:not(.algo) { width: 20px; height: 24px; }
.grp .algo { width: 17px; height: 17px; }
.g-three { width: 120px; }
.g-two { width: 82px; }
.g-one { width: 46px; border-right: 2px dotted #c4c4c4; }
.g-cursor { width: 84px; padding-left: 5px; }
.g-draw { width: 292px; border-right: 2px dotted #c4c4c4; }
.g-tf { width: 355px; border: 0; padding-left: 6px; color: #1870b4; }
.tb-end { display: flex; align-items: center; margin-left: auto; padding-right: 8px; }
.tb-end > button { display: flex; margin-right: 20px; }
.tb-end > button svg { width: 16px; height: 16px; }
.tb-end .user { position: relative; width: 30px; }
.tb-end .user svg { width: 19px; height: 19px; }
.badge { position: absolute; left: 9px; top: -7px; width: 20px; height: 20px; border-radius: 10px; background: #e03a20; color: #fff; line-height: 20px; text-align: center; }
.lvl { width: 18px; font: 700 9px/9px "Open Sans", sans-serif; color: #12a82c; text-align: center; margin-right: 9px; }
.lvl svg { width: 13px; height: 12px; margin: 0 auto; }
.level { width: 57px; height: 16px; border: 1px solid #8a8a8a; background: #fff; }
.level span { display: block; width: 20%; height: 100%; background: #3fdc3f; }

.main { position: relative; flex: 1; min-height: 0; display: grid; grid-template-columns: 290px minmax(0, 1fr); }
.docks { display: grid; grid-template-rows: minmax(0, 675fr) minmax(0, 340fr); min-height: 0; }
.dock { display: flex; flex-direction: column; min-height: 0; }
.dock-head { display: flex; height: 26px; padding: 0 6px 0 3px; align-items: center; justify-content: space-between; background: #bfccda; }
.dock-head svg, .tbx-side svg { width: 11px; height: 11px; stroke: #111; stroke-width: 2; }
.mw-body { flex: 1; min-height: 0; display: grid; grid-template-columns: 268px 1fr; }
.mw { width: 268px; height: 100%; border-collapse: collapse; table-layout: fixed; background: #fff; }
.mw .c-sym { width: 107px; }
.mw .c-num { width: 53px; }
.mw .c-day { width: 55px; }
.mw th { height: 28px; font-weight: 400; text-align: right; padding: 1px 8px 0 0; border-right: 1px solid #d0d0d0; }
.mw th:first-child { text-align: left; padding-left: 7px; }
.mw th:last-child { border: 0; }
.mw td { padding: 1px 5px 0 0; line-height: 18px; white-space: nowrap; text-align: right; border-right: 1px solid #c4cccc; border-bottom: 1px solid #c8c8c8; color: #2323ee; overflow: hidden; }
.mw td:first-child { text-align: left; color: #1b1b1b; padding-left: 7px; }
.mw td:last-child { border-right: 0; }
.mw td svg { display: inline-block; width: 11px; height: 9px; margin-right: 8px; vertical-align: 3px; }
.mw .dn { color: #f0262b; }
.mw .eq { color: #1b1b1b; }
.pink { background: #ffb6c1; }
.green { background: #90ee90; }
.blue { background: #1e90ff; }
.gold { background: #ffd700; }
.teal { background: #afeeee; }
.sky { background: #d0e0f2; }
.pale { background: #e0f0ff; }
.mw .blue td { color: #1414f0; }
.mw .blue td:first-child { color: #111; }
.mw tr.blue td.dn { color: #b3203f; }
.scroll::before { content: ""; display: block; width: 5px; border-radius: 3px; background: #8a8a8a; }
.mw-scroll { padding: 22px 0 0 9px; }
.mw-scroll::before { height: 87%; }

.tabs { display: flex; border-top: 1px solid #555; color: #888; }
.tabs button { position: relative; padding: 0 14px; height: 24px; }
.tabs .active { background: #fff; color: #1b1b1b; border: solid #333; border-width: 0 2px 2px 1px; margin-top: -1px; height: 25px; }
.tabs button:not(.active) + button::before { content: ""; position: absolute; left: 0; top: 3px; height: 18px; border-left: 1px solid #999; }
.dock-tabs { height: 32px; padding-left: 4px; }
.dock-tabs button { padding: 0 11px; }

.nav-body { flex: 1; min-height: 0; background: #fff; padding-top: 2px; }
.tree { list-style: none; margin: 0; padding: 0 0 0 10px; height: 221px; display: grid; grid-auto-rows: 1fr; }
.tree li { display: flex; align-items: center; gap: 6px; }
.tree li > svg { width: 18px; height: 18px; }
.tree .root { margin-left: -6px; }
.tree .chev { width: 7px; height: 11px; margin-right: 6px; }

.workspace { display: flex; flex-direction: column; min-width: 0; min-height: 0; padding: 0 2px 0 3px; }
.mdi { flex: 1; min-height: 0; display: grid; grid-template: repeat(2, minmax(0, 1fr)) / repeat(2, minmax(0, 1fr)); }
.win { display: flex; flex-direction: column; min-width: 0; min-height: 0; padding: 0 5px 6px 6px; border: solid #8c8c8c; border-width: 0 0 1px 1px; }
.win-head { display: flex; align-items: center; height: 35px; padding: 0 3px 0 5px; color: #8b8b8b; }
.win-head > svg { width: 18px; height: 20px; margin-right: 5px; }
.win-head h2 { flex: 1; margin-top: 1px; }
.win-head .sys { padding-top: 3px; }
.win-head .sys button { width: 41px; }
.win-head .sys svg { width: 11px; height: 11px; stroke: #aaa; }
.ws-tabs { height: 28px; padding-left: 3px; }
.ws-tabs button { padding: 0 13px; line-height: 24px; }
.ws-tabs .active { height: 23px; line-height: 22px; }
.pager { margin-left: auto; display: flex; gap: 17px; padding: 8px 12px 0 0; }
.pager svg { width: 7px; height: 9px; fill: #aaa; }

.chart { flex: 1; min-height: 0; display: grid; grid-template: minmax(0, 1fr) 22px / minmax(0, 1fr) 64px; padding: 2px 0 0 1px; background: #000; color: #ececec; font: 12px/14px "Open Sans", "Noto Sans", sans-serif; }
.plot { position: relative; overflow: hidden; }
.plot > svg { position: absolute; inset: 0; width: 100%; height: 100%; }
.plot path, .plot rect, .plot line, .tick-plot path, .tick-plot line { vector-effect: non-scaling-stroke; }
.axis-y, .axis-x { position: relative; }
.axis-y span { position: absolute; left: 0; padding-left: 5px; transform: translateY(-50%); white-space: nowrap; }
.axis-y span::before { content: ""; position: absolute; left: 0; top: 7px; width: 4px; border-top: 1px solid #ccc; }
.axis-y .plain::before { display: none; }
.axis-y .tag { background: #768a9e; color: #101820; padding: 1px 2px 1px 5px; }
.axis-x { grid-column: 1 / -1; }
.axis-x span { position: absolute; top: 4px; white-space: nowrap; }
.axis-x span::before { content: ""; position: absolute; left: 0; top: -4px; height: 4px; border-left: 1px solid #ccc; }
.note { position: absolute; left: 6px; transform: translateY(-50%); white-space: nowrap; }
.note.flush { left: 3px; }
.plot-title { position: relative; display: flex; align-items: center; gap: 8px; height: 24px; padding: 2px 0 0 5px; white-space: pre; }
.plot-title svg { width: 18px; height: 15px; }
.oct { position: relative; width: 259px; margin: 2px 0 0 2px; display: grid; grid-template-columns: 1fr 1fr; column-gap: 2px; font-family: "Open Sans", "Noto Sans", sans-serif; color: #fff; }
.oct-top { grid-column: 1 / -1; display: flex; height: 26px; background: #000; }
.oct-top > button { flex: none; width: 63px; color: #f4d8dc; font-size: 14px; line-height: 26px; }
.oct .red-t { background: #f94848; border-bottom: 1px solid #7a0c0c; }
.oct .blue-t { background: #4c4cfb; border-bottom: 1px solid #10107a; }
.oct .vol { flex: 1; min-width: 0; display: flex; margin: 0 2px; height: 25px; background: #fff; border: 1px solid #bbb; }
.oct .vol button { flex: none; width: 23px; display: grid; place-items: center; }
.oct .vol button::after, .spin button::after { content: ""; border: 4px solid transparent; border-top: 0; border-bottom: 5px solid #111; }
.oct .vol .dec::after, .spin .dec::after { border: 4px solid transparent; border-bottom: 0; border-top: 5px solid #111; }
.oct .vol input { flex: 1; width: 0; min-width: 0; border: solid #aaa; border-width: 0 1px; padding: 0 6px; text-align: right; color: #222; }
.oct .px { height: 48px; display: flex; justify-content: center; gap: 6px; align-items: flex-end; font-weight: 700; font-size: 15px; line-height: 18px; padding-bottom: 8px; }
.oct .px b { font-weight: 400; font-size: 34px; line-height: 32px; }
.oct .px i { font-style: normal; align-self: flex-start; padding-top: 6px; }
.oct .red-b { background: linear-gradient(#e03434, #a80000); }
.oct .blue-b { background: linear-gradient(#3434e0, #0000a8); }

.highlight { position: absolute; left: 519px; top: 228px; border: 8px solid #ea0909; padding: 6px 15px 11px 7px; }
.dialog {
  display: grid; grid-template: 35px auto / 244px 519px 423px; width: 1186px; overflow: hidden;
  background: #fff; border-radius: 10px; box-shadow: 0 0 0 1px #6a6a6a;
  font: 13px/16px "Noto Sans", "Open Sans", sans-serif;
}
.dlg-head { grid-column: 1 / -1; display: flex; align-items: center; background: #f3f3f3; color: #999; padding-left: 10px; font: 14px/20px "Open Sans", sans-serif; }
.dlg-head h2 { flex: 1; }
.side { background: #f3f4fa; padding: 0 0 11px 11px; display: flex; flex-direction: column; gap: 3px; font-size: 15px; }
.side button { display: flex; align-items: center; gap: 6px; height: 42px; text-align: left; color: #000; }
.side .active { background: #fff; }
.side span { width: 37px; height: 36px; display: grid; place-items: center; }
.side svg { width: 20px; height: 18px; }
.spacer { flex: 1; }
.form { display: flex; flex-direction: column; padding: 18px 1px 21px 19px; height: 503px; }
.row { display: flex; align-items: center; height: 22px; }
.row label, .lab { width: 81px; margin-right: 11px; text-align: right; }
.gap-l { margin-top: 29px; }
.gap-s { margin-top: 11px; }
.gap-m { margin-top: 24px; }
.combo { position: relative; width: 388px; height: 22px; border: 1px solid #9a9a9a; }
.combo select, .combo input { display: block; appearance: none; width: 100%; height: 20px; border: 0; padding: 0 5px; background: #fff; }
.combo svg { position: absolute; right: 6px; top: 7px; width: 10px; height: 7px; pointer-events: none; }
.num { width: 98px; height: 22px; border: 1px solid #ececec; border-bottom-color: #777; padding: 0 5px; text-align: right; }
.spin { display: grid; margin-left: 2px; width: 20px; height: 22px; }
.spin button { height: 11px; border: 1px solid #d0d0d0; background: #fafafa; display: grid; place-items: center; }
.unit { margin-left: 10px; }
.policy { color: inherit; text-decoration: none; border-bottom: 2px solid #0a78d4; margin-left: -3px; padding-top: 4px; }
.quote { flex: 1; display: flex; justify-content: center; align-items: center; white-space: pre; font-size: 32px; color: #000; }
.quote small { font-size: 25px; padding-top: 5px; }
.deal { display: flex; gap: 18px; }
.deal button { flex: 1; height: 27px; color: #fff; }
.deal .sell { background: #e33e3f; }
.deal .buy { background: #3f78fb; }
.result { height: 27px; margin-top: 10px; background: #efefef; border: 1px solid #e0e0e0; }
.ticks { padding: 8px 0 0 19px; display: flex; flex-direction: column; }
.tick-tools { display: flex; align-items: center; margin-left: -2px; }
.tick-tools button { width: 31px; height: 29px; margin-right: 3px; display: grid; place-items: center; }
.tick-tools i { height: 27px; border-left: 1px solid #a0a0a0; margin: 0 3px 0 0; }
.tick-tools svg { width: 19px; height: 19px; }
.tick-tools .dim { filter: grayscale(1); opacity: .45; }
.tick-chart { margin-top: 11px; display: grid; grid-template: 419px 37px / 337px 1fr; color: #1b1b1b; font: 12px/14px "Open Sans", "Noto Sans", sans-serif; }
.tick-plot { position: relative; border: 1px solid #d4d4d4; }
.tick-plot > svg { position: absolute; inset: 0; width: 100%; height: 100%; }
.tick-chart .axis-y span { padding-left: 7px; }
.tick-chart .axis-y .badge-y { left: 3px; padding: 0 4px; color: #fff; }
.tick-chart .axis-y .badge-y::before { display: none; }
.ask { background: #ff5a5a; }
.bid { background: #0a5cff; }
.hair { background: #686868; }
.tip, .axis-x .hair { position: absolute; padding: 0 3px; color: #fff; background: #686868; white-space: nowrap; }
.tick-chart .axis-x span { top: 5px; }
.tick-chart .axis-x .hair::before { display: none; }

.toolbox { display: grid; grid-template-columns: 25px minmax(0, 1fr); height: 175px; border-top: 1px solid #a0a0a0; border-bottom: 1px solid #a0a0a0; }
.tbx-side { background: #bfccda; display: flex; flex-direction: column; align-items: center; justify-content: space-between; padding: 5px 0 4px; }
.tbx-side h2 { writing-mode: vertical-rl; transform: rotate(180deg); font-size: 13px; }
.tbx-body { height: 145px; overflow: hidden; display: grid; grid-template-columns: minmax(0, 1fr) 21px; align-items: start; }
.trades { width: 100%; border-collapse: collapse; table-layout: fixed; background: #fff; }
.t1 { width: 12.75%; } .t2 { width: 8.85%; } .t3 { width: 8.65%; } .t4 { width: 9.75%; } .t5 { width: 9.79%; }
.trades tbody tr { height: 24px; }
.trades tr:nth-child(even) { background: #eaeaea; }
.trades th, .trades td { padding: 0 5px; font-weight: 400; line-height: 20px; text-align: right; white-space: nowrap; border-right: 1px solid #d0d0d0; }
.trades th { padding-right: 7px; }
.trades td { border-bottom: 1px solid #d0d0d0; }
.trades tr > :nth-child(-n+2) { text-align: left; }
.trades td:nth-child(2) { padding-left: 4px; }
.trades th:first-child, .trades th:nth-child(2) { padding-left: 8px; }
.trades tr > :last-child { border-right: 0; }
.trades thead tr { height: 27px; }
.sort { display: inline-block; margin-left: 18px; border: 5px solid transparent; border-top: 0; border-bottom: 5px solid #111; vertical-align: 4px; }
.doc { display: inline-block; width: 14px; height: 18px; margin-right: 8px; vertical-align: -3px; color: #1870b4; }
.doc.red { color: #e04a43; }
.trades .neg { color: #f0262b; }
.trades .pos { color: #2323ee; }
.trades td:last-child { padding-right: 7px; }
.trades button { margin-left: 9px; }
.trades button svg { width: 10px; height: 10px; stroke: #999; stroke-width: 1.500; }
.tbx-scroll { padding: 20px 0 0 8px; }
.tbx-scroll::before { height: 46px; }
.tbx-tabs { height: 28px; padding-left: 4px; }
.tbx-tabs button { padding: 0 12px 0 11px; }
.tabs sub { color: #f0262b; font: 700 12px/12px "Open Sans", sans-serif; margin-left: 3px; }
.links { margin-left: auto; display: flex; gap: 13px; padding: 3px 8px 0 0; color: #1b1b1b; }
.links a { display: flex; align-items: center; gap: 4px; color: inherit; text-decoration: none; }
.links svg { width: 18px; height: 18px; }
.links .dim { color: #b0b0b0; }

.status { display: flex; height: 26px; line-height: 28px; padding-left: 2px; }
.status span + span { border-left: 1px solid #b4b4b4; padding-left: 5px; }
.s-help { flex: 1; }
.s-def { width: 161px; }
.s-a { width: 128px; }
.s-b { width: 87px; }
.s-ms { width: 145px; display: flex; align-items: center; gap: 7px; }
.s-ms svg { width: 17px; height: 14px; }
```
FILE: charts.js
```js
// Candles: [x, high, top, bottom, low, kind] with kind g (up), r (down) or w (doji).
const times = ['22 Jul 2026', '23 Jul 06:00', '23 Jul 14:00', '23 Jul 22:00', '24 Jul 06:00', '24 Jul 14:00', '24 Jul 22:00', '27 Jul 06:00'];
const onGrid = (x0, step, rows) => rows.map((r, i) => [x0 + i * step, ...r]);

const charts = [
  {
    name: 'USDJPY,H1', title: 'USDJPY, H1:  US Dollar vs Japanese Yen', box: [29, 111, 2088, 1284], w: 24, ticks: [30, 274.6],
    sell: ['red', '163', '55', '9'], buy: ['blue', '163', '57', '6'],
    y: [[271, '163.880'], [431, '163.750'], [592, '163.620'], [667, '163.559', 'tag']],
    notes: [[643, 'SELL 0.01 at 163.561'], [661, 'BUY 0.01 at 163.546'], [662, 'BUY 0.01 at 163.547'], [681, 'SELL 0.01 at 163.532']],
    price: 668, orders: [664, 683, 700], marks: [[2056, 648, '#e8502a', 13], [2056, 674, '#e8502a', 13]],
    candles: onGrid(30, 34.33, [
      [1183,1183,1208,1208,'g'],[1162,1183,1198,1202,'r'],[1220,1258,1262,1286,'r'],[1183,1224,1262,1268,'g'],[1212,1228,1260,1262,'r'],[1194,1257,1296,1310,'r'],
      [1260,1288,1294,1372,'g'],[1248,1282,1291,1310,'g'],[1258,1282,1312,1328,'r'],[1262,1276,1311,1330,'g'],[1228,1233,1276,1285,'g'],[1220,1231,1234,1283,'w'],
      [840,973,1232,1235,'g'],[820,942,979,1008,'g'],[878,907,947,1008,'g'],[892,905,907,940,'w'],[583,760,904,950,'g'],[436,534,764,764,'g'],
      [178,178,534,545,'g'],[150,176,300,330,'r'],[225,225,370,372,'r'],[336,374,416,475,'r'],[325,328,416,482,'g'],[322,328,374,407,'r'],
      [306,349,377,413,'g'],[283,349,353,375,'r'],[312,380,408,446,'r'],[318,322,404,405,'g'],[294,322,331,375,'r'],[207,331,356,384,'r'],
      [303,374,409,473,'r'],[370,404,408,467,'w'],[294,376,409,416,'g'],[322,343,377,398,'g'],[318,328,347,381,'g'],[320,331,421,421,'r'],
      [375,420,422,560,'w'],[362,421,467,476,'r'],[422,464,517,521,'r'],[370,391,517,534,'g'],[328,371,388,426,'g'],[300,316,374,381,'g'],
      [280,312,402,402,'r'],[335,405,433,507,'r'],[405,431,487,573,'r'],[380,395,490,510,'g'],[330,345,400,430,'g'],[300,330,350,420,'g'],
      [300,322,340,400,'r'],[305,318,440,455,'r'],[500,572,760,780,'g'],[490,508,590,760,'g'],[500,512,600,640,'r'],[530,560,622,740,'r'],
      [540,580,760,780,'r'],[620,655,760,770,'g'],[630,655,658,700,'w'],[625,650,653,700,'w'],[615,648,652,700,'w'],[640,650,670,700,'r']]),
    lines: [
      ['#00b400', '30,1275 98,1243 132,1233 167,1227 201,1231 304,1233 338,1252 372,1256 406,1265 441,1270 510,1264 545,1218 579,1160 613,1115 640,1085 700,930 777,726 819,620 853,578 921,506 990,448 1059,420 1127,381 1161,382 1196,387 1265,379 1334,371 1368,390 1402,397 1436,412 1471,420 1505,410 1540,395 1620,400 1700,380 1760,400 1850,480 1950,540 2040,590 2090,620'],
      ['#d00000', '30,1300 98,1286 167,1262 235,1247 350,1243 406,1255 510,1264 579,1260 640,1205 800,950 940,720 980,668 1059,580 1196,480 1265,464 1334,438 1402,422 1540,430 1700,400 1850,410 1990,470 2090,560'],
      ['#0000d8', '30,1378 98,1364 200,1338 304,1308 406,1289 476,1285 640,1285 900,1050 1200,722 1265,665 1300,640 1368,610 1436,570 1505,535 1600,520 1750,500 1900,510 2090,480']]
  },
  {
    name: 'GBPUSD,H1', title: 'GBPUSD, H1:  British Pound vs US Dollar', box: [34, 111, 1409, 1284], w: 15, ticks: [34, 185.3], split: [962, 968],
    sell: ['red', '1.33', '55', '7'], buy: ['red', '1.33', '57', '4'],
    y: [[170, '1.33890'], [330, '1.33680'], [421, '1.33557', 'tag'], [488, '1.33470'], [645, '1.33260'], [806, '1.33050'], [988, '-145472', 'plain'], [1375, '-158284', 'plain']],
    notes: [[418, 'SELL 0.01 at 1.33539']],
    price: 421, orders: [435],
    candles: [
      [195,168,171,186,190,'g'],[218,165,171,182,190,'r'],[241,160,181,186,190,'r'],[288,160,190,192,194,'w'],
      [404,412,412,430,545,'r'],[427,430,430,526,588,'r'],[450,507,526,634,647,'r'],[473,611,631,700,710,'r'],[497,662,690,740,750,'r'],[520,655,669,740,750,'g'],[543,662,669,740,750,'r'],[566,710,722,740,750,'g'],[589,700,717,719,740,'w'],[612,705,717,740,750,'r'],[635,712,730,740,750,'w'],[658,715,730,740,750,'w'],[682,722,724,740,750,'g'],[705,664,668,740,750,'g'],[728,646,658,690,700,'r'],[751,678,685,740,750,'r'],[821,722,740,745,750,'g'],[844,652,655,740,750,'g'],[867,514,580,655,680,'g'],[891,567,580,685,690,'r'],[914,690,706,708,740,'w'],[937,630,680,682,700,'w'],[960,640,677,681,700,'g'],[983,655,673,772,776,'r'],[1006,646,656,772,806,'g'],[1030,586,646,656,708,'g'],[1053,477,530,647,665,'g'],[1076,505,531,602,613,'r'],[1099,600,602,661,687,'r'],[1122,626,656,661,670,'g'],[1145,640,656,686,690,'r'],[1169,657,688,860,862,'r'],[1192,567,670,911,943,'g'],[1215,420,523,628,635,'g'],[1239,457,466,523,533,'g'],[1262,373,462,466,476,'g'],[1285,366,368,463,465,'g'],[1308,366,368,436,438,'r'],[1331,420,434,451,476,'r'],[1354,435,451,465,473,'r'],[1378,424,450,466,473,'g'],[1401,402,421,450,459,'g']],
    lines: [
      ['#0000d8', '498,392 520,430 543,495 566,540 590,580 612,645 635,690 658,712 682,725 720,690 751,715 775,735 891,724 940,718 970,716 983,720 1030,710 1099,700 1125,697 1150,697 1169,706 1192,703 1220,696 1262,684 1290,660 1331,635 1354,622 1401,604'],
      ['#1f8f86', '985,1250 1006,1168 1030,1175 1053,1132 1076,1177 1122,1214 1145,1258 1169,1305 1192,1300 1215,1297 1239,1274 1262,1335 1285,1253 1308,1321 1331,1327 1354,1354 1378,1357 1401,1341']]
  },
  {
    name: 'USDCHF,H1', title: 'USDCHF, H1:  US Dollar vs Swiss Franc', box: [21, 148, 1456, 1266], w: 16, ticks: [21, 191.5], split: [987, 993],
    sell: ['blue', '0.81', '43', '1'], buy: ['blue', '0.81', '44', '6'],
    y: [[1014, '0.001134', 'plain'], [1394, '-0.000683', 'plain']],
    notes: [[708, 'BUY 0.01 at 0.81462'], [1022, 'MACD(12,26,9) -0.000525 -0.000218', 'flush']],
    price: 770, orders: [728],
    candles: onGrid(21, 23.93, [
      [736,738,758,760,'r'],[747,758,774,784,'r'],[750,797,822,828,'g'],[732,756,796,797,'g'],[754,756,795,797,'r'],[782,794,837,845,'r'],[800,810,839,879,'g'],[800,808,897,904,'r'],[852,897,921,947,'r'],[905,921,934,967,'r'],[899,916,934,958,'g'],[811,821,916,945,'g'],[588,720,823,825,'g'],[630,725,727,787,'w'],[671,726,739,787,'r'],[657,673,738,753,'g'],[446,538,675,676,'g'],[440,445,538,540,'g']]).concat([[1217,800,820,824,914,'w']]),
    bars: [1256, 45, 23.93, [1086,1091,1091,1096,1106,1118,1134,1154,1173,1186,1184,1171,1160,1158,1146,1121,1091,1068,1056,1036,1043,1029,1027,1033,1042,1060,1066,1071,1087,1096,1095,1098,1096,1095,1109,1130,1143,1157,1159,1148,1132,1127,1130,1146,1147,1137,1130,1121,1133,1180,1195,1216,1256,1311,1333,1350,1360,1362,1380]],
    lines: [['#e00000', '21,1138 60,1125 92,1112 130,1103 165,1099 212,1107 250,1123 284,1140 333,1155 370,1163 410,1161 440,1150 476,1131 524,1099 572,1068 600,1052 630,1045 691,1046 740,1057 787,1073 859,1093 920,1111 978,1127 1050,1137 1085,1146 1120,1145 1160,1138 1195,1135 1240,1146 1285,1167 1340,1210 1385,1258 1433,1304', '3 2']]
  },
  {
    name: 'USDJPY,H1', title: 'USDJPY, H1:  US Dollar vs Japanese Yen', box: [34, 148, 1409, 1266], w: 15, ticks: [34, 185.3], split: [987, 993],
    sell: ['red', '163', '55', '9'], buy: ['blue', '163', '57', '6'],
    y: [[210, '163.945'], [366, '163.750'], [518, '163.559', 'tag'], [676, '163.360'], [833, '163.165'], [1014, '0.557', 'plain'], [1394, '-0.145', 'plain']],
    notes: [[1022, 'RVI(10) 0.034 0.045', 'flush']],
    price: 516, orders: [515, 525, 537], marks: [[1401, 498, '#e8502a', 9], [1401, 520, '#e8502a', 9], [1401, 544, '#1870b4', 9]],
    candles: [
      [79,880,897,903,914,'r'],[102,880,885,903,907,'g'],[125,880,885,901,903,'r'],[148,890,897,921,923,'r'],[172,900,917,921,974,'g'],[195,890,914,919,923,'g'],[218,898,914,925,927,'r'],[241,900,911,925,927,'g'],[265,870,880,913,916,'g'],[288,860,870,874,914,'w'],
      [983,280,288,328,340,'g'],[1006,263,286,345,346,'r'],[1030,300,346,362,412,'r'],[1053,347,363,401,458,'r'],[1076,343,345,401,405,'g'],[1099,296,320,339,343,'g'],[1122,282,295,320,331,'g'],[1145,285,286,296,322,'g'],[1169,276,285,369,375,'r'],[1192,418,465,613,615,'g'],[1215,402,412,451,526,'g'],[1239,407,412,472,481,'r'],[1262,445,465,472,553,'g'],[1285,460,463,587,588,'r'],[1308,506,510,587,605,'g'],[1331,477,507,510,526,'w'],[1354,488,505,508,533,'w'],[1378,484,497,503,522,'g']],
    lines: [
      ['#006e00', '34,1228 56,1210 79,1230 102,1249 150,1273 195,1306 218,1323 241,1338 265,1347 288,1332 311,1278 335,1222 358,1180 381,1153 404,1132 430,1100 450,1064 473,1032 495,1028 515,1050 543,1096 566,1124 589,1143 635,1163 658,1181 684,1228 705,1293 728,1343 751,1349 774,1327 797,1313 820,1306 860,1306 891,1334 914,1366 937,1379 960,1366 985,1325 1006,1308 1030,1322 1053,1350 1076,1366 1099,1351 1124,1314 1145,1274 1169,1264 1215,1279 1239,1268 1262,1253 1285,1259 1308,1270 1331,1285 1354,1299 1378,1306 1401,1309'],
      ['#e00000', '34,1290 56,1253 79,1229 102,1228 125,1240 172,1269 195,1281 218,1299 265,1328 288,1336 311,1329 335,1298 381,1204 404,1170 427,1139 450,1110 473,1081 497,1052 520,1040 543,1051 566,1079 589,1106 612,1131 635,1146 658,1160 682,1178 705,1213 728,1261 751,1309 774,1335 797,1334 820,1322 867,1308 891,1312 914,1328 960,1364 985,1363 1006,1347 1030,1324 1053,1322 1076,1335 1099,1351 1124,1350 1145,1330 1169,1301 1192,1280 1215,1271 1262,1269 1308,1262 1331,1266 1354,1277 1401,1301']]
  }
];

const pct = (v, from, span) => ((v - from) / span * 100).toFixed(3) + '%';

function plotSvg(c) {
  const [bx, by, bw, bh] = c.box;
  const hline = (y, stroke, dash = '') => `<path d="M${bx} ${y}h${bw}" stroke="${stroke}" stroke-dasharray="${dash}"/>`;
  let s = `<svg viewBox="${c.box.join(' ')}" preserveAspectRatio="none" fill="none">`;
  s += '<g shape-rendering="crispEdges">';
  s += hline(c.price, '#778899') + c.orders.map(y => hline(y, '#1f9a1f', '3 2')).join('');
  for (const [x, hi, top, bot, lo, k] of c.candles) {
    s += `<path d="M${x} ${hi}V${lo}" stroke="#c8c8c8"/>`;
    const fill = { g: '#008000', r: '#ff0000', w: '#ffffff' }[k];
    s += `<rect x="${x - c.w / 2}" y="${top}" width="${c.w}" height="${Math.max(bot - top, 1)}" fill="${fill}" stroke="${k === 'g' ? '#d4f5d4' : '#ffe0e0'}"/>`;
  }
  if (c.bars) {
    const [base, x0, step, tops] = c.bars;
    tops.forEach((t, i) => { s += `<path d="M${x0 + i * step} ${base}V${t}" stroke="#a8a8a8"/>`; });
  }
  if (c.split) {
    s += `<rect x="${bx}" y="${c.split[0]}" width="${bw}" height="${c.split[1] - c.split[0]}" fill="#000"/>` + hline(c.split[0], '#bbb') + hline(c.split[1], '#ddd');
  }
  s += '</g>';
  for (const [color, pts, dash = ''] of c.lines) s += `<path d="M${pts}" stroke="${color}" stroke-dasharray="${dash}"/>`;
  for (const [x, y, f, r] of c.marks || []) s += `<path d="M${x} ${y - 13}l${r} 9h-${r / 2}v8h${r / 2}l-${r} 9-${r}-9h${r / 2}v-8h-${r / 2}z" fill="${f}" stroke="#ffd8c8"/>`;
  s += `<rect x="${bx}" y="${by}" width="${bw}" height="${bh}" stroke="#b8b8b8" stroke-width="2"/>`;
  return s + '</svg>';
}

function price([tone, small, big, sup]) {
  return `<div class="px ${tone}-b"><span>${small}</span><b>${big}</b><i>${sup}</i></div>`;
}

function chartWindow(c, n) {
  const [bx, by, bw, bh] = c.box;
  return `<section class="win">
    <header class="win-head"><svg><use href="#i-candles"/></svg><h2>${c.name}</h2>
      <div class="sys"><button aria-label="Minimize chart"><svg><use href="#i-low"/></svg></button><button aria-label="Maximize chart"><svg><use href="#i-max"/></svg></button><button aria-label="Close chart"><svg><use href="#i-close"/></svg></button></div></header>
    <div class="chart">
      <div class="plot">${plotSvg(c)}
        ${c.notes.map(([y, t, k]) => `<span class="note ${k || ''}" style="top:${pct(y, by, bh)}">${t}</span>`).join('')}
        <div class="plot-title"><svg><use href="#i-market"/></svg><svg><use href="#i-oneclick"/></svg><span>${c.title}</span></div>
        <div class="oct">
          <div class="oct-top"><button class="${c.sell[0]}-t">SELL</button>
            <div class="vol"><button class="dec" aria-label="Decrease volume"></button><input aria-label="Volume" id="oct-${n}" value="0.01"><button aria-label="Increase volume"></button></div>
            <button class="${c.buy[0]}-t">BUY</button></div>
          ${price(c.sell)}${price(c.buy)}
        </div>
      </div>
      <div class="axis-y">${c.y.map(([y, t, k]) => `<span class="${k || ''}" style="top:${pct(y, by, bh)}">${t}</span>`).join('')}</div>
      <div class="axis-x">${times.map((t, i) => `<span style="left:${((c.ticks[0] + i * c.ticks[1] - bx) / bw * 92.6).toFixed(2)}%">${t}</span>`).join('')}</div>
    </div></section>`;
}

document.getElementById('mdi').innerHTML = charts.map(chartWindow).join('');

// Tick chart of the order window.
const askPts = '107,930 115,930 120,960 126,932 132,962 140,940 146,962 152,932 160,962 167,978 170,930 174,835 181,803 186,850 188,900 196,900 200,945 206,962 212,1010 217,980 222,962 228,948 234,994 240,1010 244,994 250,1074 252,1010 259,980 265,1010 273,1042 280,1026 286,994 290,947 305,947 309,850 316,882 321,850 327,803 333,820 338,805 348,805 352,833 357,805 364,835 370,822 374,866 378,914 382,930 388,868 392,835 398,850 406,820 410,835 416,790 424,810 430,790 437,790 442,850 446,772 454,787 460,772 465,770 470,757 474,775 478,820 481,820 484,600 487,582 500,597 503,690 507,690 510,660 514,690 519,722 526,708 534,724 541,754 548,724 551,708 556,754 562,726 566,660 571,646 576,629 583,645 588,726 593,740 597,770 602,740 607,724 613,740 618,692 622,708 626,630 631,629 634,548 639,629 645,580 651,500 654,437 660,534 667,564 671,548 690,548 697,517 704,548 714,520 722,534 727,450 730,390 733,452 737,390 740,440 743,516 752,532 760,530 763,500 767,486 772,500 778,550 783,517 790,564 797,548 801,580 805,534 809,630 813,643 818,580 821,502 826,517 830,548 847,548 852,580 857,580 862,548 869,520 875,564 880,530 887,500 890,390 895,390 898,405 903,390 908,405 911,470 917,440 922,470 926,532 933,455 938,500 944,640 951,645 955,660 959,708 963,680 967,692 972,645 979,645 982,612 986,612 989,676 995,692 1003,708 1007,740 1010,724 1021,724 1028,770 1035,724 1044,740 1048,752 1054,740 1118,740';
const bidPts = '107,1183 110,1170 113,1190 117,1170 120,1198 133,1198 140,1218 146,1187 157,1187 163,1199 169,1199 171,1108 181,1089 187,1124 195,1140 199,1187 203,1172 206,1218 212,1247 220,1200 228,1200 236,1232 240,1218 248,1235 250,1314 252,1262 257,1219 263,1234 270,1281 277,1265 280,1234 286,1233 290,1171 294,1198 299,1187 305,1198 311,1108 318,1108 328,1028 335,1058 340,1042 345,1074 351,1088 356,1062 362,1088 368,1060 374,1090 378,1185 385,1185 388,1092 392,1107 399,1105 404,1089 412,1088 416,1060 423,1089 427,1058 440,1058 442,1108 444,1042 450,1042 456,1028 462,1025 470,980 474,995 478,1057 481,1050 484,820 490,803 499,822 501,868 505,916 511,900 514,930 520,978 526,947 535,970 540,995 546,962 550,947 556,1010 562,960 566,886 571,835 576,884 583,884 587,930 590,992 597,978 604,993 611,980 614,946 620,930 624,962 627,862 633,866 636,803 640,840 646,803 650,760 654,692 659,770 664,820 673,803 678,786 687,803 694,787 702,770 712,756 722,760 726,662 730,645 733,690 737,645 740,740 744,787 752,775 759,787 765,724 772,740 778,786 787,757 795,787 802,770 806,838 812,898 818,866 822,740 830,770 840,724 848,787 856,833 864,787 872,820 880,770 886,724 888,645 893,629 900,632 905,676 911,705 920,692 926,756 933,692 939,756 943,898 948,884 956,900 960,930 966,930 971,868 978,900 983,852 988,930 998,934 1003,992 1008,980 1015,992 1020,980 1027,1010 1035,978 1045,992 1051,978 1054,1012 1118,1012';
const [tx, ty, tw, th] = [107, 278, 1012, 1113];
const tickY = [[437, '163.595'], [597, '163.585'], [756, '163.575'], [916, '163.565'], [1075, '163.555'], [1234, '163.545']];
const tickX = [[107, '2026.07.27'], [581, '09:32'], [700, '09:33'], [818, '09:34'], [937, '09:35'], [1054, '09:37:13']];
const gridX = [227, 346, 463, 583, 700, 818, 937, 1054];
const path = pts => 'M' + pts;

document.getElementById('tick-chart').innerHTML = `
  <div class="tick-plot"><svg viewBox="${tx} ${ty} ${tw} ${th}" preserveAspectRatio="none" fill="none">
    <g stroke="#dedede" stroke-dasharray="4 3">${gridX.map(x => `<path d="M${x} ${ty}v${th}"/>`).join('')}${tickY.map(([y]) => `<path d="M${tx} ${y}h${tw}"/>`).join('')}</g>
    <path d="${path(askPts)}" stroke="#ff6464"/><path d="${path(bidPts)}" stroke="#0a5cff"/>
    <path d="M392 ${ty}v${th}M${tx} 1163h${tw}" stroke="#8a8a8a"/></svg>
    <span class="tip" style="left:${pct(408, tx, tw)};top:${pct(1108, ty, th)}">163.553 / 163.570</span></div>
  <div class="axis-y">${tickY.map(([y, t]) => `<span style="top:${pct(y, ty, th)}">${t}</span>`).join('')}
    <span class="badge-y ask" style="top:${pct(741, ty, th)}">163.576</span><span class="badge-y bid" style="top:${pct(1012, ty, th)}">163.559</span><span class="badge-y hair" style="top:${pct(1164, ty, th)}">163.549</span></div>
  <div class="axis-x">${tickX.map(([x, t]) => `<span style="left:${((x - tx) / 3).toFixed(0)}px">${t}</span>`).join('')}<span class="hair" style="left:${((216 - tx) / 3).toFixed(0)}px">2026.07.27 09:30:07</span></div>`;
```
